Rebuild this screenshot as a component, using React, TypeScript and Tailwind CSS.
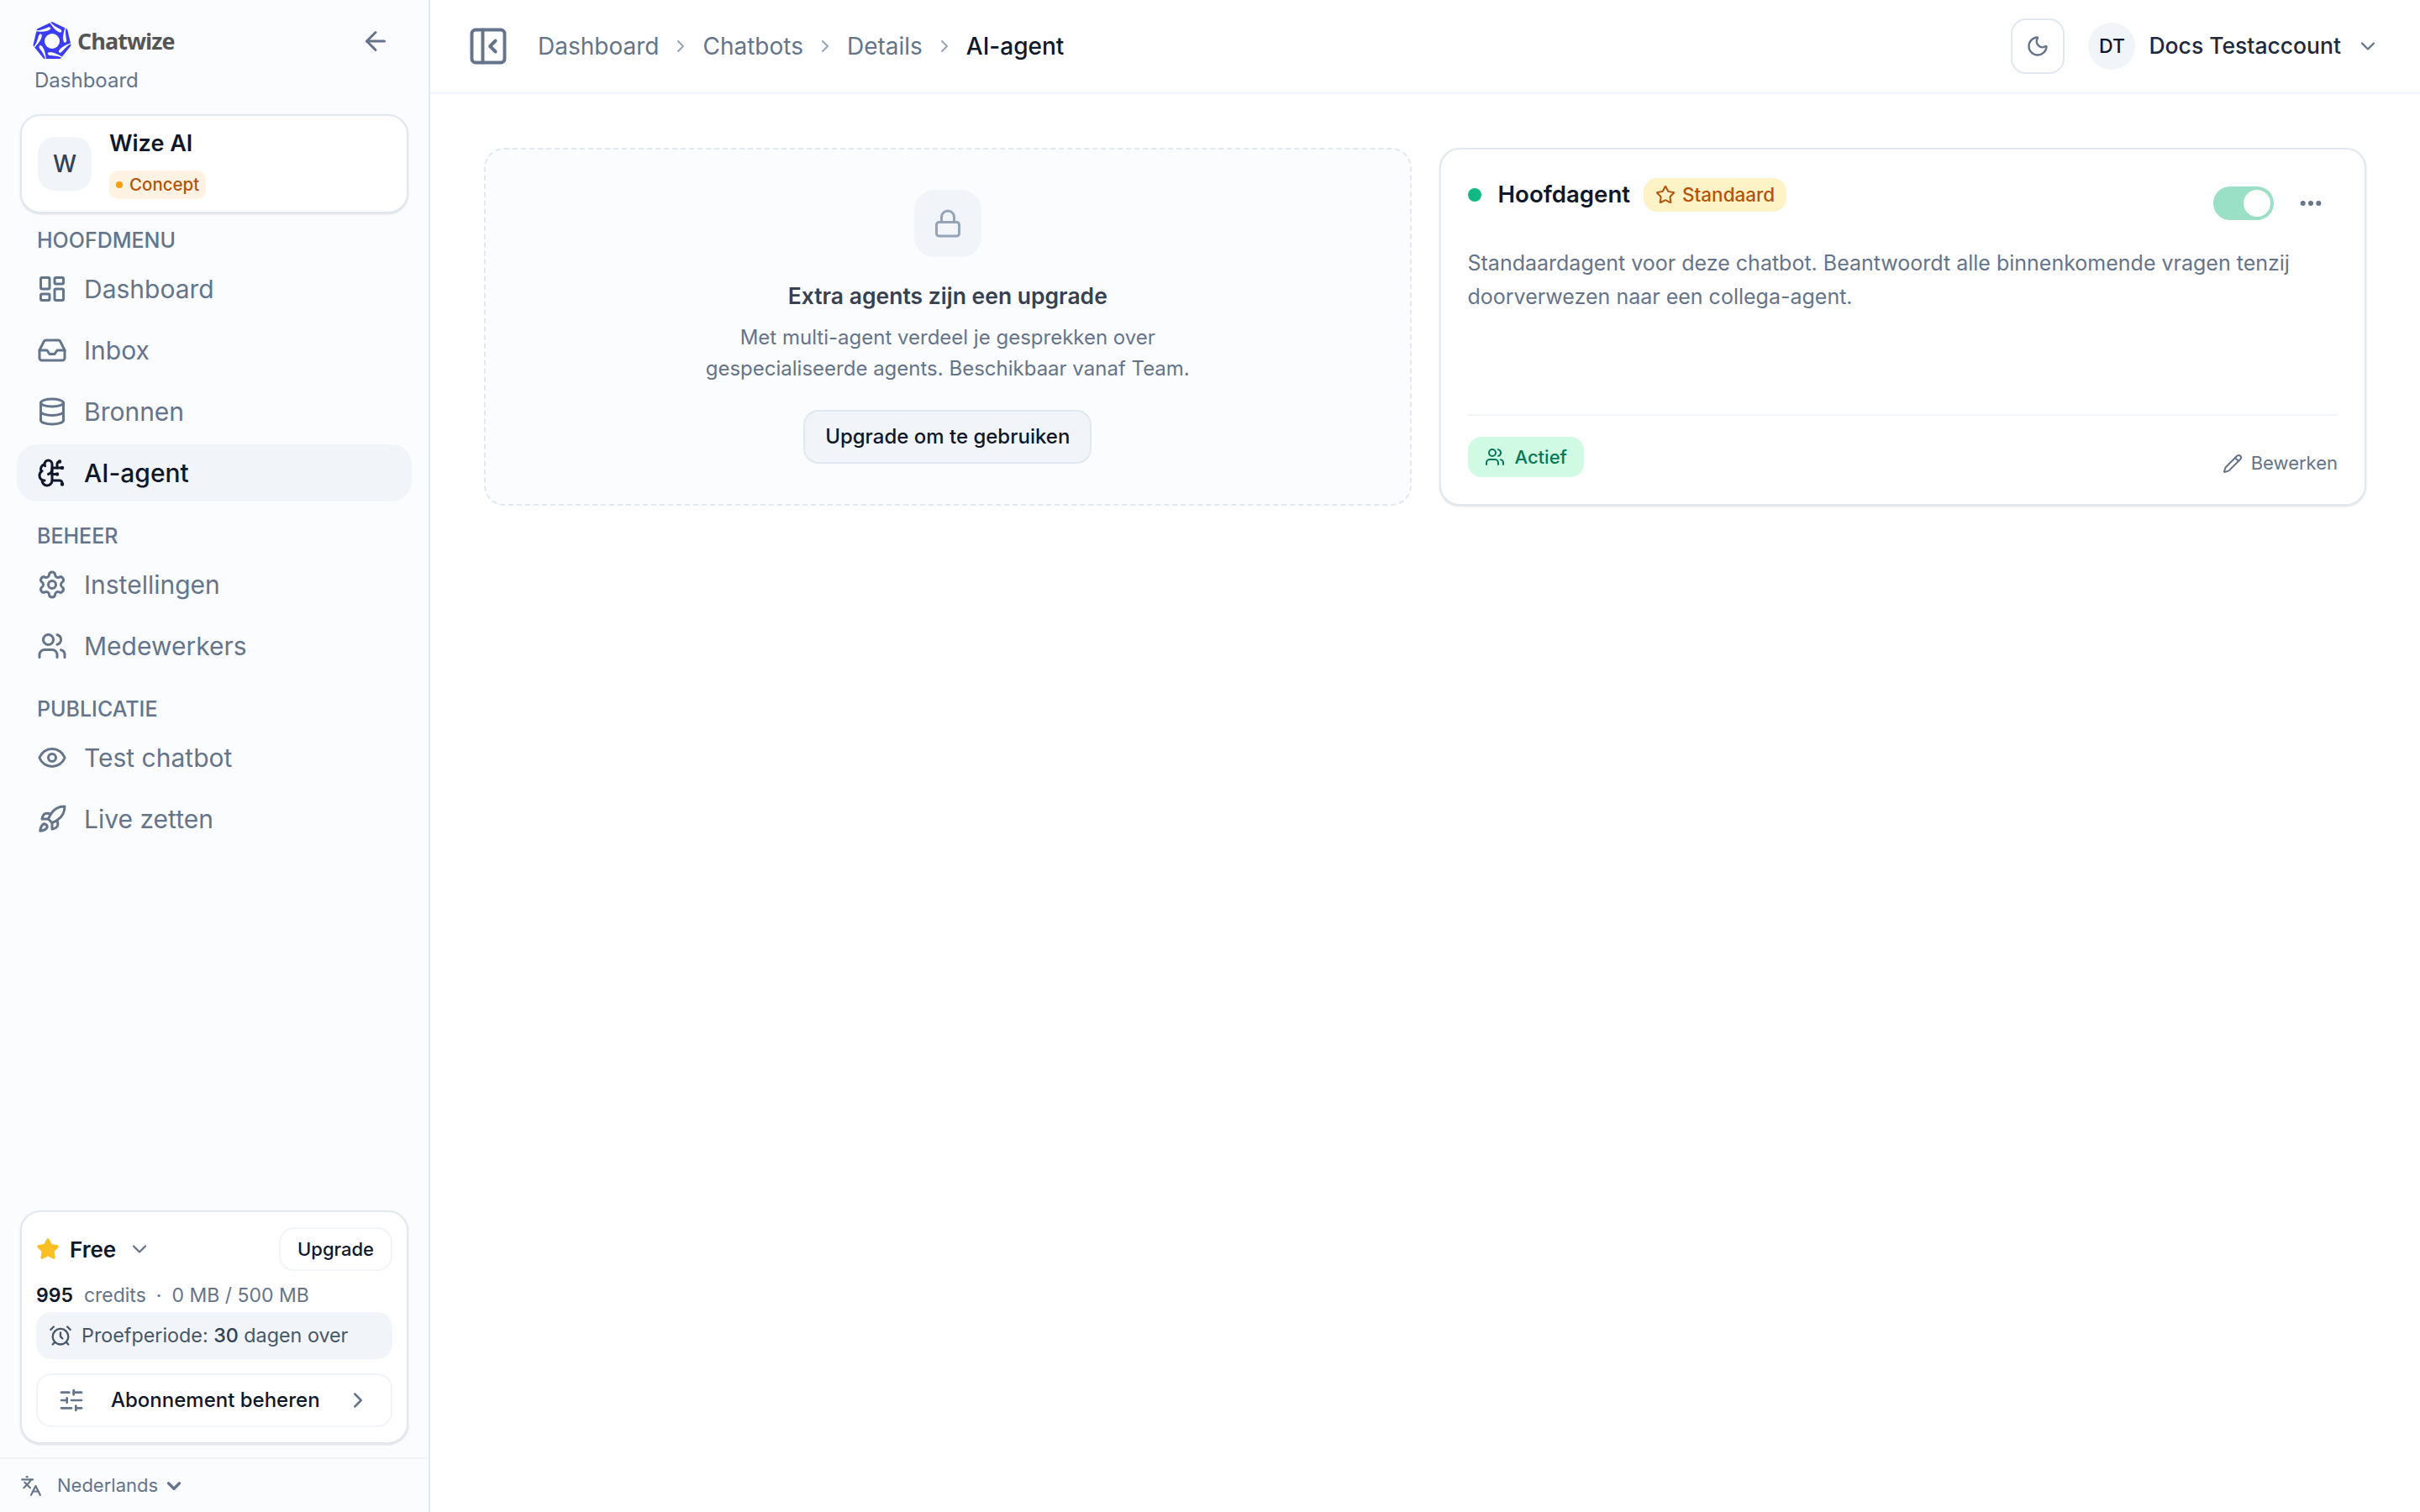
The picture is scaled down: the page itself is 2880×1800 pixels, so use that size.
import {
  AlarmClock,
  ArrowLeft,
  BrainCircuit,
  ChevronDown,
  ChevronRight,
  Database,
  Ellipsis,
  Eye,
  Inbox,
  Languages,
  LayoutDashboard,
  Lock,
  Moon,
  PanelLeftClose,
  Pencil,
  Rocket,
  Settings,
  SlidersHorizontal,
  Star,
  Users,
} from "lucide-react";
import type { LucideIcon } from "lucide-react";

const sections: { label?: string; items: { label: string; icon: LucideIcon; active?: boolean }[] }[] = [
  {
    label: "Hoofdmenu",
    items: [
      { label: "Dashboard", icon: LayoutDashboard },
      { label: "Inbox", icon: Inbox },
      { label: "Bronnen", icon: Database },
      { label: "AI-agent", icon: BrainCircuit, active: true },
    ],
  },
  {
    label: "Beheer",
    items: [
      { label: "Instellingen", icon: Settings },
      { label: "Medewerkers", icon: Users },
    ],
  },
  {
    label: "Publicatie",
    items: [
      { label: "Test chatbot", icon: Eye },
      { label: "Live zetten", icon: Rocket },
    ],
  },
];

function Logo() {
  const petals = [0, 51.43, 102.86, 154.29, 205.71, 257.14, 308.57];
  return (
    <svg width="48" height="48" viewBox="0 0 48 48">
      <polygon
        points="24,2.5 40.8,10.6 45,28.8 33.3,43.4 14.7,43.4 3,28.8 7.2,10.6"
        fill="#3b3df5"
        stroke="#3b3df5"
        strokeWidth="3"
        strokeLinejoin="round"
      />
      <circle cx="24" cy="24" r="9" fill="#fbfcfe" />
      {petals.map((a) => (
        <path
          key={a}
          transform={`rotate(${a} 24 24)`}
          fill="#fbfcfe"
          d="M21.5 0.5 C25 5.5 30 7.5 34 10 C36 11.5 35.5 13.8 33.8 13.6 C29.5 13 25 8 20.7 1 Z"
        />
      ))}
    </svg>
  );
}

function Sidebar() {
  return (
    <aside className="w-[512px] h-[1800px] shrink-0 flex flex-col bg-[#fbfcfe] border-r-2 border-[#e2e8f0]">
      <div className="pl-[38px] pr-[45px] pt-[25px]">
        <div className="flex items-center justify-between">
          <div className="flex items-center gap-[6px]">
            <Logo />
            <span className="font-['Open_Sans'] text-[27px] leading-[40px] font-bold tracking-[-1px] text-[#555555]">
              Chatwize
            </span>
          </div>
          <ArrowLeft size={36} strokeWidth={2} className="text-[#64748b]" />
        </div>
        <p className="mt-[7px] pl-[3px] text-[24px] leading-[32px] text-[#64748b]">Dashboard</p>
      </div>

      <div className="mx-[24px] mt-[24px] h-[118px] flex items-center gap-[21px] px-[19px] bg-white border-2 border-[#e2e8f0] rounded-[24px] shadow-sm">
        <div className="w-[64px] h-[64px] flex items-center justify-center rounded-[20px] bg-[#f1f5f9] text-[28px] font-medium text-[#334155]">
          W
        </div>
        <div className="flex flex-col items-start">
          <span className="text-[27px] leading-[36px] font-semibold text-[#0f172a]">Wize AI</span>
          <span className="mt-[14px] h-[34px] flex items-center gap-[8px] px-[8px] rounded-[10px] bg-[#fef3e2] text-[20.5px] font-medium text-[#b45309]">
            <span className="w-[8px] h-[8px] rounded-full bg-[#f59e0b]" />
            Concept
          </span>
        </div>
      </div>

      <nav className="mt-[16px] px-[20px]">
        {sections.map((section) => (
          <div key={section.label} className="mb-[25px]">
            <p className="pl-[24px] mb-[8px] text-[25px] leading-[32px] font-medium uppercase text-[#64748b]">
              {section.label}
            </p>
            <div className="flex flex-col gap-[5px]">
              {section.items.map((item) => (
                <div
                  key={item.label}
                  className={`h-[68px] flex items-center gap-[20px] pl-[24px] rounded-[24px] ${
                    item.active ? "bg-[#f1f5f9] text-[#0f172a] font-medium" : "text-[#64748b]"
                  }`}
                >
                  <item.icon size={36} strokeWidth={2} />
                  <span className="text-[30px] leading-[40px]">{item.label}</span>
                </div>
              ))}
            </div>
          </div>
        ))}
      </nav>

      <div className="mt-auto mx-[24px] px-[17px] py-[18px] bg-white border-2 border-[#e2e8f0] rounded-[24px] shadow-sm">
        <div className="flex items-center justify-between h-[52px]">
          <div className="flex items-center">
            <Star size={28} fill="#fbbf24" stroke="#fbbf24" />
            <span className="ml-[12px] text-[26px] font-semibold text-[#0f172a]">Free</span>
            <ChevronDown size={28} className="ml-[14px] text-[#64748b]" />
          </div>
          <button className="h-[52px] px-[20px] rounded-[18px] border-2 border-[#f1f5f9] text-[22px] font-medium text-[#0f172a]">
            Upgrade
          </button>
        </div>
        <p className="mt-[13px] text-[23px] leading-[32px] text-[#64748b]">
          <span className="font-semibold text-[#0f172a]">995</span>
          <span className="ml-[13px]">credits</span>
          <span className="mx-[12px]">·</span>
          0 MB / 500 MB
        </p>
        <div className="mt-[4px] h-[56px] flex items-center gap-[11px] pl-[15px] rounded-[18px] bg-[#f1f5f9] text-[23.3px] text-[#475569]">
          <AlarmClock size={28} className="text-[#475569]" />
          <span>
            Proefperiode: <span className="font-medium text-[#334155]">30</span> dagen over
          </span>
        </div>
        <div className="mt-[17px] h-[64px] flex items-center pl-[24px] pr-[24px] rounded-[18px] border-2 border-[#f1f5f9]">
          <SlidersHorizontal size={32} className="text-[#64748b]" />
          <span className="ml-[31px] text-[24px] font-medium text-[#0f172a]">Abonnement beheren</span>
          <ChevronRight size={30} className="ml-auto text-[#64748b]" />
        </div>
      </div>

      <div className="mt-[16px] h-[65px] flex items-center gap-[18px] px-[24px] border-t-2 border-[#f1f5f9] text-[#64748b]">
        <Languages size={26} />
        <span className="flex items-center gap-[6px] text-[22px]">
          Nederlands
          <ChevronDown size={26} strokeWidth={3} />
        </span>
      </div>
    </aside>
  );
}

function Topbar() {
  return (
    <header className="h-[112px] flex items-center justify-between pl-[43px] pr-[48px] border-b-2 border-[#f1f5f9] bg-white">
      <div className="flex items-center">
        <PanelLeftClose size={52} strokeWidth={1.8} className="text-[#64748b]" />
        <nav className="ml-[33px] flex items-center gap-[14px] text-[28px] text-[#64748b]">
          <span>Dashboard</span>
          <ChevronRight size={24} className="text-[#94a3b8]" />
          <span>Chatbots</span>
          <ChevronRight size={24} className="text-[#94a3b8]" />
          <span>Details</span>
          <ChevronRight size={24} className="text-[#94a3b8]" />
          <span className="font-medium text-[#0f172a]">AI-agent</span>
        </nav>
      </div>
      <div className="flex items-center">
        <div className="w-[64px] h-[66px] flex items-center justify-center rounded-[18px] border-2 border-[#e2e8f0]">
          <Moon size={28} className="text-[#64748b]" />
        </div>
        <div className="ml-[28px] w-[56px] h-[56px] flex items-center justify-center rounded-full bg-[#f1f5f9] text-[23px] font-medium text-[#0f172a]">
          DT
        </div>
        <span className="ml-[16px] text-[26.5px] font-medium text-[#1e293b]">Docs Testaccount</span>
        <ChevronDown size={28} className="ml-[18px] text-[#64748b]" />
      </div>
    </header>
  );
}

function UpgradeCard() {
  return (
    <div className="h-[426px] flex flex-col items-center pt-[48px] rounded-[24px] border-2 border-dashed border-[#e2e8f0] bg-[#fbfcfe]">
      <div className="w-[80px] h-[80px] flex items-center justify-center rounded-[24px] bg-[#f1f5f9]">
        <Lock size={36} className="text-[#94a3b8]" />
      </div>
      <h3 className="mt-[26px] text-[26.5px] leading-[40px] font-semibold text-[#374151]">Extra agents zijn een upgrade</h3>
      <p className="mt-[12px] text-center text-[24px] leading-[36.5px] text-[#64748b]">
        Met multi-agent verdeel je gesprekken over
        <br />
        gespecialiseerde agents. Beschikbaar vanaf Team.
      </p>
      <button className="mt-[31px] h-[64px] px-[24px] rounded-[18px] border-2 border-[#e2e8f0] bg-[#f1f5f9] text-[24px] font-medium text-[#0f172a]">
        Upgrade om te gebruiken
      </button>
    </div>
  );
}

function AgentCard() {
  return (
    <div className="h-[426px] flex flex-col px-[32px] pt-[34px] rounded-[24px] border-2 border-[#e2e8f0] bg-white shadow-sm">
      <div className="flex items-start justify-between">
        <div className="h-[40px] flex items-center">
          <span className="w-[16px] h-[16px] rounded-full bg-[#10b981]" />
          <span className="ml-[20px] text-[27.6px] font-semibold text-[#0f172a]">Hoofdagent</span>
          <span className="ml-[16px] h-[40px] flex items-center gap-[8px] px-[14px] rounded-[16px] bg-[#fef3c7] text-[22.5px] font-medium text-[#b45309]">
            <Star size={24} />
            Standaard
          </span>
        </div>
        <div className="mt-[10px] flex items-center gap-[28px] pr-[16px]">
          <div className="w-[72px] h-[40px] flex items-center justify-end pr-[4px] rounded-full bg-[#9ae0c6]">
            <span className="w-[32px] h-[32px] rounded-full bg-white" />
          </div>
          <Ellipsis size={32} strokeWidth={2.5} className="text-[#64748b]" />
        </div>
      </div>
      <p className="mt-[31px] text-[25px] leading-[40px] text-[#64748b]">
        Standaardagent voor deze chatbot. Beantwoordt alle binnenkomende vragen tenzij
        <br />
        doorverwezen naar een collega-agent.
      </p>
      <div className="mt-auto mb-[32px] pt-[25px] border-t-2 border-[#f1f5f9] flex items-start justify-between">
        <span className="h-[48px] flex items-center gap-[12px] px-[20px] rounded-[16px] bg-[#d1fae5] text-[22px] font-medium text-[#047857]">
          <Users size={24} />
          Actief
        </span>
        <span className="mt-[15px] flex items-center gap-[10px] text-[22px] text-[#64748b]">
          <Pencil size={24} />
          Bewerken
        </span>
      </div>
    </div>
  );
}

export default function App() {
  return (
    <div className="w-[2880px] h-[1800px] flex overflow-hidden bg-white font-['Inter',sans-serif]">
      <Sidebar />
      <main className="flex-1 min-w-0">
        <Topbar />
        <div className="grid grid-cols-2 gap-[33px] px-[64px] pt-[64px]">
          <UpgradeCard />
          <AgentCard />
        </div>
      </main>
    </div>
  );
}
